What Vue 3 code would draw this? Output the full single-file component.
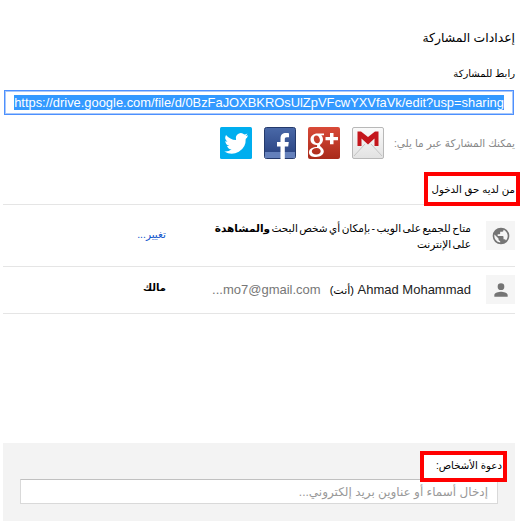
<template>
  <div class="dialog" dir="rtl">
    <h1 class="title">إعدادات المشاركة</h1>

    <p class="link-label">رابط للمشاركة</p>
    <div class="link-box"><span class="link-text" dir="ltr">https://drive.google.com/file/d/0BzFaJOXBKROsUlZpVFcwYXVfaVk/edit?usp=sharing</span></div>

    <div class="share-row">
      <span class="share-text">يمكنك المشاركة عبر ما يلي:</span>
      <svg class="share-icon" viewBox="0 0 32 32">
        <defs>
          <linearGradient id="gm" x1="0" y1="0" x2="0" y2="1"><stop offset="0" stop-color="#fafafa" /><stop offset="1" stop-color="#e2e2e2" /></linearGradient>
        </defs>
        <rect x="0.5" y="0.5" width="31" height="31" rx="1.5" fill="url(#gm)" stroke="#b8b8b8" />
        <path d="M2 29 13 17M30 29 19 17" stroke="#c4c4c4" stroke-width="1" fill="none" />
        <path d="M5.500 4.500H9l7 5.500 7-5.500h3.500V19h-4v-7.500L16 17.500 9.500 11.500V19h-4z" fill="#c4161c" />
      </svg>
      <svg class="share-icon" viewBox="0 0 32 32">
        <defs>
          <linearGradient id="gp" x1="0" y1="0" x2="0" y2="1"><stop offset="0" stop-color="#d94a38" /><stop offset="1" stop-color="#a92a1a" /></linearGradient>
        </defs>
        <rect width="32" height="32" rx="2" fill="url(#gp)" />
        <path d="M22 6h3.500v4H30v3.200h-4.500v4H22v-4h-4.500V10H22z" fill="#fff" />
        <path d="M16 6.500h-6.500C5.500 6.500 2.500 9 2.500 12.500c0 3.300 2.600 5.400 5.800 5.400h1c-.4.700-.5 1.300-.2 2.100-4 .1-8.100 1.500-8.100 5.200C1 28.500 4 30 8 30c4.600 0 7.800-2.400 7.800-5.400 0-3.600-3.800-4.500-3.800-6 0-1.400 3-2.200 3-6 0-1.900-.8-3.400-1.800-4.400H16zM8.300 8.500c2 0 3.400 2 3.600 4.300.2 2-.9 3.500-2.500 3.500-2 0-3.400-2-3.600-4.300-.2-2 .8-3.500 2.500-3.500zM8.700 21c2.500 0 4 1.400 4 3.200 0 1.800-1.700 3.300-4.400 3.300-2.800 0-4.500-1.400-4.500-3.300C3.800 22.300 6 21 8.700 21z" fill="#fff" />
      </svg>
      <svg class="share-icon" viewBox="0 0 32 32">
        <defs>
          <linearGradient id="fb" x1="0" y1="0" x2="0" y2="1"><stop offset="0" stop-color="#4a69a8" /><stop offset="1" stop-color="#263f7e" /></linearGradient>
        </defs>
        <rect x="0.5" y="0.5" width="31" height="31" rx="2" fill="url(#fb)" stroke="#243a6c" />
        <rect x="1" y="25" width="30" height="6" fill="#6480bb" />
        <path d="M16.500 32V19.500H13v-4.500h3.500v-3.500c0-3.800 2.200-5.500 5.400-5.500 1.500 0 2.600.1 3.100.2v4h-2.200c-1.600 0-2 .8-2 2V15h4l-.6 4.500H20.800V32z" fill="#fff" />
      </svg>
      <svg class="share-icon" viewBox="0 0 32 32">
        <rect width="32" height="32" rx="1.500" fill="#00aeef" />
        <path d="M28 8.300c-.9.400-1.800.7-2.800.8 1-.6 1.800-1.600 2.200-2.700-1 .6-2 1-3.100 1.200A4.900 4.900 0 0 0 16 12c0 .4 0 .8.100 1.100C12 12.900 8.400 11 6 8a4.900 4.900 0 0 0 1.500 6.500c-.8 0-1.600-.2-2.200-.6 0 2.400 1.700 4.400 3.900 4.900-.7.200-1.500.2-2.200.1.600 2 2.400 3.400 4.600 3.400A9.900 9.900 0 0 1 4.300 24.400a13.900 13.900 0 0 0 21.400-12.400c1-.7 1.700-1.600 2.300-3.700z" fill="#fff" />
      </svg>
    </div>

    <div class="section-head">
      <h2 class="marked who">من لديه حق الدخول</h2>
    </div>

    <div class="row row-public">
      <span class="badge">
        <svg viewBox="0 0 24 24" width="20" height="20"><path d="M12 2a10 10 0 1 0 0 20 10 10 0 0 0 0-20zm-1 17.900A8 8 0 0 1 4.200 10.200L9 15v1a2 2 0 0 0 2 2zm6.900-2.500A2 2 0 0 0 16 16h-1v-3a1 1 0 0 0-1-1H8v-2h2a1 1 0 0 0 1-1V7h2a2 2 0 0 0 2-2v-.4a8 8 0 0 1 2.900 12.800z" fill="#757575" /></svg>
      </span>
      <div class="public-cell">
        <p class="public-text">متاح للجميع على الويب - بإمكان أي شخص البحث <b>والمشاهدة</b> على الإنترنت</p>
      </div>
      <a class="change">تغيير...</a>
    </div>

    <div class="row row-owner">
      <span class="badge">
        <svg viewBox="0 0 24 24" width="20" height="20"><path d="M12 12a4 4 0 1 0 0-8 4 4 0 0 0 0 8zm0 2c-2.700 0-8 1.300-8 4v2h16v-2c0-2.700-5.300-4-8-4z" fill="#757575" /></svg>
      </span>
      <p class="owner-text"><span class="owner-name" dir="ltr">Ahmad Mohammad</span> <span class="you">(أنت)</span><span class="email" dir="ltr">...mo7@gmail.com</span></p>
      <span class="role">مالك</span>
    </div>

    <div class="invite">
      <h2 class="marked people">دعوة الأشخاص:</h2>
      <div class="invite-input">إدخال أسماء أو عناوين بريد إلكتروني...</div>
    </div>
  </div>
</template>

<script setup>
</script>

<style scoped>
.dialog { width: 522px; height: 529px; box-sizing: border-box; padding: 29px 7px 0 3px; background: #fff; color: #000; font-family: "Liberation Sans", "DejaVu Sans", sans-serif; font-size: 11px; overflow: hidden; }
h1, h2, p { margin: 0; font-weight: normal; }
.title { font-size: 12.4px; line-height: 18px; height: 18px; }
.link-label { margin-top: 19px; font-size: 10px; line-height: 16px; }
.link-box { margin: 8px 1px 0 0; width: 510px; height: 25px; box-sizing: border-box; border: 1px solid #4d90fe; box-shadow: inset 0 0 0 1px #a9c9fb; display: flex; align-items: center; justify-content: center; font-size: 12.9px; white-space: nowrap; }
.link-text { background: #3399ff; color: #fff; }
.share-row { display: flex; align-items: center; margin-top: 12px; height: 32px; }
.share-text { color: #888; font-size: 10.5px; width: 131px; flex: none; white-space: nowrap; }
.share-icon { width: 32px; height: 32px; margin-left: 12px; flex: none; }
.section-head { margin-top: 13px; height: 32px; }
.marked { position: relative; z-index: 1; border: 4px solid #f00; box-sizing: border-box; font-size: 10.2px; display: inline-block; white-space: nowrap; background: #fff; }
.who { margin-right: -5px; padding: 8px 1px 0 0; width: 96px; height: 34px; }
.row { display: flex; align-items: flex-start; border-top: 1px solid #e5e5e5; box-sizing: border-box; }
.row-public { height: 62px; padding-top: 16px; }
.row-owner { height: 48px; padding-top: 8px; border-bottom: 1px solid #e5e5e5; }
.badge { width: 29px; height: 29px; background: #f5f5f5; display: flex; align-items: center; justify-content: center; flex: none; }
.public-cell { width: 280px; margin: -1px 15px 0 0; flex: none; }
.public-text { width: 265px; line-height: 16px; font-size: 10.5px; word-spacing: -1.5px; }
.change { color: #15c; margin-right: 25px; margin-top: 7px; font-size: 10.5px; }
.owner-text { width: 280px; margin-right: 15px; flex: none; font-size: 13px; line-height: 30px; white-space: nowrap; }
.owner-name { color: #222; }
.you { font-size: 11px; }
.email { color: #777; margin-right: 9px; }
.role { margin-right: 25px; margin-top: 7px; font-size: 10px; font-weight: bold; }
.invite { margin-top: 129px; height: 78px; box-sizing: border-box; background: #f3f3f3; padding: 8px 8px 0 0; }
.people { display: block; width: 87px; height: 31px; padding: 5px 1px 0 0; }
.invite-input { margin: -3px 9px 0 0; width: 478px; height: 25px; box-sizing: border-box; background: #fff; border: 1px solid #d9d9d9; border-top-color: #c0c0c0; padding: 0 9px; line-height: 25px; color: #999; font-size: 12px; }
</style>

<style>
html, body { margin: 0; background: #fff; }
</style>
